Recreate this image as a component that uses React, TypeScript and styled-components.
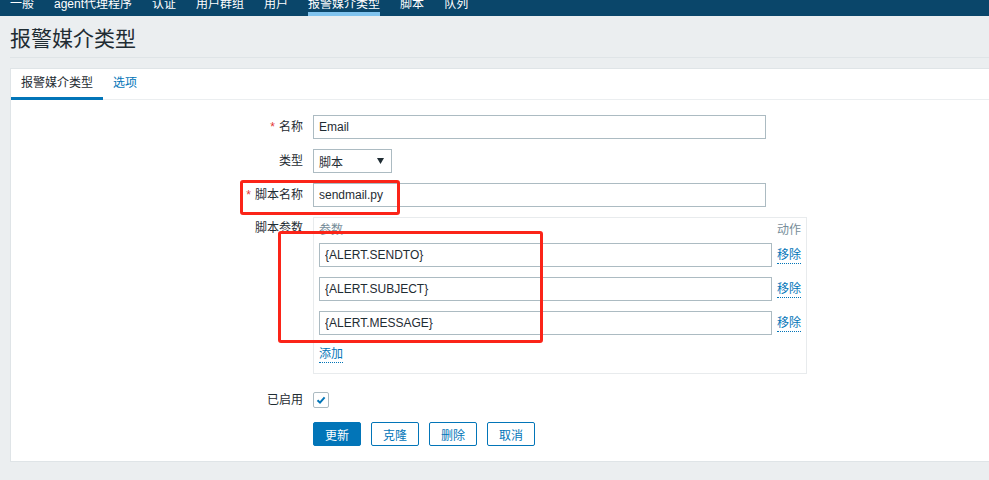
import React from "react";
import styled, { createGlobalStyle } from "styled-components";

const Global = createGlobalStyle`
  html, body { margin: 0; padding: 0; background: #ebeef0; }
  body {
    font-family: "Liberation Sans", Arial, "Noto Sans CJK SC", sans-serif;
    font-size: 12px;
    color: #1f2c33;
  }
  * { box-sizing: border-box; }
`;

const FONT = `"Liberation Sans", Arial, "Noto Sans CJK SC", sans-serif`;

const Page = styled.div`
  position: relative;
  width: 989px;
  height: 480px;
  overflow: hidden;
  background: #ebeef0;
`;

const TopNav = styled.nav`
  height: 16px;
  background: #0a466a;
  display: flex;
  align-items: flex-end;
  gap: 20px;
  padding-left: 10px;
  overflow: hidden;
`;

const NavItem = styled.span<{ $active?: boolean }>`
  color: #fff;
  font-size: 12px;
  line-height: 14px;
  padding-bottom: 1px;
  white-space: nowrap;
  border-bottom: 4px solid ${(p) => (p.$active ? "#80c3ee" : "transparent")};
`;

const Content = styled.div`
  padding-left: 10px;
`;

const Header = styled.header`
  padding: 11px 0 6px;
  border-bottom: 1px solid #dfe4e7;
  margin-bottom: 10px;
`;

const Title = styled.h1`
  margin: 0;
  font-size: 21px;
  font-weight: normal;
  line-height: 24px;
  color: #1f2c33;
`;

const Panel = styled.section`
  background: #fff;
  border: 1px solid #dfe4e7;
  border-right: none;
  padding-bottom: 15px;
`;

const TabList = styled.div`
  display: flex;
  height: 31px;
  border-bottom: 1px solid #ebeef0;
`;

const Tab = styled.span<{ $active?: boolean }>`
  height: 31px;
  margin-bottom: -1px;
  padding: 0 10px;
  line-height: 28px;
  border-bottom: 3px solid ${(p) => (p.$active ? "#0275b8" : "transparent")};
  color: ${(p) => (p.$active ? "#1f2c33" : "#0275b8")};
  cursor: pointer;
`;

const Form = styled.div`
  display: grid;
  grid-template-columns: 292px 1fr;
  column-gap: 10px;
  row-gap: 10px;
  padding-top: 15px;
  align-items: center;
`;

const Label = styled.label<{ $top?: boolean }>`
  justify-self: end;
  white-space: nowrap;
  line-height: 15px;
  ${(p) => (p.$top ? "align-self: start; padding-top: 4px;" : "")}
`;

const Asterisk = styled.span`
  color: #e33734;
  margin-right: 4px;
`;

const TextInput = styled.input<{ $w?: number }>`
  width: ${(p) => p.$w ?? 453}px;
  height: 24px;
  border: 1px solid #acbbc2;
  border-radius: 0;
  padding: 0 5px;
  font-family: ${FONT};
  font-size: 12px;
  color: #1f2c33;
  background: #fff;
  outline: none;
`;

const Select = styled.div`
  width: 79px;
  height: 24px;
  border: 1px solid #acbbc2;
  padding: 0 7px 0 5px;
  display: flex;
  align-items: center;
  justify-content: space-between;
  color: #1f2c33;
`;

const ParamsBox = styled.div`
  width: 494px;
  margin-bottom: 4px;
  border: 1px solid #e8ebed;
  padding: 5px;
  display: flex;
  flex-direction: column;
`;

const ParamRow = styled.div<{ $header?: boolean }>`
  display: flex;
  align-items: center;
  gap: 5px;
  padding: ${(p) => (p.$header ? "0" : "5px 0")};
  line-height: 15px;
`;

const HeadCell = styled.span<{ $grow?: boolean }>`
  color: #768d99;
  ${(p) => (p.$grow ? "width: 453px;" : "")}
`;

const Link = styled.span`
  color: #0275b8;
  border-bottom: 1px dotted #0275b8;
  line-height: 15px;
  margin-top: 2px;
  cursor: pointer;
`;

const CheckRow = styled.div`
  height: 24px;
  display: flex;
  align-items: center;
`;

const CheckBox = styled.span`
  width: 16px;
  height: 16px;
  border: 1px solid #acbbc2;
  border-radius: 2px;
  background: #fff;
  display: flex;
  align-items: center;
  justify-content: center;
`;

const Buttons = styled.div`
  display: flex;
  gap: 10px;
`;

const Button = styled.button<{ $primary?: boolean }>`
  width: 48px;
  height: 24px;
  padding: 0;
  border: 1px solid #0275b8;
  border-radius: 2px;
  background: ${(p) => (p.$primary ? "#0275b8" : "#fff")};
  color: ${(p) => (p.$primary ? "#fff" : "#0275b8")};
  font-family: ${FONT};
  font-size: 12px;
  cursor: pointer;
`;

const Mark = styled.div`
  position: absolute;
  border: 3px solid #fb2418;
  border-radius: 3px;
  pointer-events: none;
`;

const navItems = ["一般", "agent代理程序", "认证", "用户群组", "用户", "报警媒介类型", "脚本", "队列"];
const params = ["{ALERT.SENDTO}", "{ALERT.SUBJECT}", "{ALERT.MESSAGE}"];

export default function App() {
  return (
    <Page>
      <Global />
      <TopNav>
        {navItems.map((n) => (
          <NavItem key={n} $active={n === "报警媒介类型"}>
            {n}
          </NavItem>
        ))}
      </TopNav>
      <Content>
        <Header>
          <Title>报警媒介类型</Title>
        </Header>
        <Panel>
          <TabList>
            <Tab $active>报警媒介类型</Tab>
            <Tab>选项</Tab>
          </TabList>
          <Form>
            <Label>
              <Asterisk>*</Asterisk>名称
            </Label>
            <TextInput defaultValue="Email" />

            <Label>类型</Label>
            <Select>
              <span>脚本</span>
              <svg width="7" height="6" viewBox="0 0 7 6">
                <path d="M0 0 H7 L3.5 6 Z" fill="#1f2c33" />
              </svg>
            </Select>

            <Label>
              <Asterisk>*</Asterisk>脚本名称
            </Label>
            <TextInput defaultValue="sendmail.py" />

            <Label $top>脚本参数</Label>
            <ParamsBox>
              <ParamRow $header>
                <HeadCell $grow>参数</HeadCell>
                <HeadCell>动作</HeadCell>
              </ParamRow>
              {params.map((p) => (
                <ParamRow key={p}>
                  <TextInput defaultValue={p} />
                  <Link>移除</Link>
                </ParamRow>
              ))}
              <ParamRow>
                <Link>添加</Link>
              </ParamRow>
            </ParamsBox>

            <Label>已启用</Label>
            <CheckRow>
              <CheckBox>
                <svg width="12" height="12" viewBox="0 0 12 12">
                  <path d="M2.5 6.2 L5 8.6 L9.6 3.4" fill="none" stroke="#0275b8" strokeWidth="2" />
                </svg>
              </CheckBox>
            </CheckRow>

            <span />
            <Buttons>
              <Button $primary>更新</Button>
              <Button>克隆</Button>
              <Button>删除</Button>
              <Button>取消</Button>
            </Buttons>
          </Form>
        </Panel>
      </Content>
      <Mark style={{ left: 240, top: 180, width: 160, height: 35 }} />
      <Mark style={{ left: 278, top: 231, width: 265, height: 112 }} />
    </Page>
  );
}
